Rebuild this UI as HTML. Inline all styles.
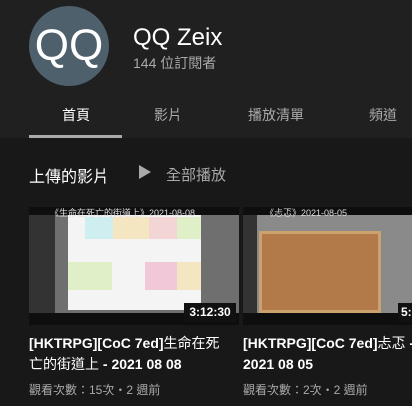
<!DOCTYPE html>
<html><head><meta charset="utf-8"><style>
*{margin:0;padding:0;box-sizing:border-box}
body{width:412px;height:406px;overflow:hidden;background:#181818;font-family:"Liberation Sans","Noto Sans CJK TC",sans-serif;position:relative}
.a{position:absolute}
</style></head><body>
<div class="a" style="left:0;top:0;width:412px;height:138px;background:#202020"></div>
<div class="a" style="left:29px;top:6px;width:80px;height:80px;border-radius:50%;background:#4e606c;color:#fff;font-size:44px;line-height:80px;text-align:center">QQ</div>
<div class="a" style="left:133px;top:24px;color:#fff;font-size:24px">QQ Zeix</div>
<div class="a" style="left:133px;top:53px;color:#aaa;font-size:14px">144 位訂閱者</div>
<div class="a" style="left:62px;top:105px;color:#fff;font-size:14px">首頁</div>
<div class="a" style="left:154px;top:105px;color:#aaa;font-size:14px">影片</div>
<div class="a" style="left:248px;top:105px;color:#aaa;font-size:14px">播放清單</div>
<div class="a" style="left:369px;top:105px;color:#aaa;font-size:14px">頻道</div>
<div class="a" style="left:29px;top:135px;width:93px;height:3px;background:#aaa"></div>
<div class="a" style="left:29px;top:163px;color:#fff;font-size:16px">上傳的影片</div>
<div class="a" style="left:139px;top:165px;width:0;height:0;border-left:12px solid #aaa;border-top:7px solid transparent;border-bottom:7px solid transparent"></div>
<div class="a" style="left:166px;top:164px;color:#aaa;font-size:15px">全部播放</div>

<div class="a" style="left:29px;top:207px;width:210px;height:118px;background:#0e0e0e"></div>
<div class="a" style="left:29px;top:215px;width:210px;height:98px;background:#6f6f6f"></div>
<div class="a" style="left:68px;top:215px;width:133px;height:95px;background:#f4f4f4"></div>
<div class="a" style="left:85px;top:217px;width:28px;height:22px;background:#cfeef0"></div>
<div class="a" style="left:113px;top:217px;width:36px;height:22px;background:#f3e6c0"></div>
<div class="a" style="left:149px;top:217px;width:28px;height:22px;background:#f3d5d5"></div>
<div class="a" style="left:177px;top:217px;width:24px;height:22px;background:#dff0c8"></div>
<div class="a" style="left:68px;top:262px;width:44px;height:28px;background:#dff0c8"></div>
<div class="a" style="left:145px;top:262px;width:32px;height:28px;background:#f0c8d8"></div>
<div class="a" style="left:177px;top:262px;width:24px;height:28px;background:#f3e6c0"></div>
<div class="a" style="left:29px;top:215px;width:26px;height:98px;background:#333"></div>
<div class="a" style="left:50px;top:206px;color:#ddd;font-size:9px">《生命在死亡的街道上》2021-08-08</div>
<div class="a" style="left:184px;top:303px;width:52px;height:19px;background:#111;color:#fff;font-size:12px;font-weight:bold;line-height:19px;text-align:center">3:12:30</div>

<div class="a" style="left:243px;top:207px;width:169px;height:118px;background:#0e0e0e"></div>
<div class="a" style="left:243px;top:215px;width:169px;height:98px;background:#8a8a8a"></div>
<div class="a" style="left:243px;top:215px;width:14px;height:98px;background:#333"></div>
<div class="a" style="left:259px;top:231px;width:122px;height:82px;background:#c9a26e"></div>
<div class="a" style="left:262px;top:234px;width:116px;height:76px;background:#b27a49"></div>
<div class="a" style="left:265px;top:206px;color:#ddd;font-size:9px">《忐忑》2021-08-05</div>
<div class="a" style="left:398px;top:303px;width:20px;height:19px;background:#111;color:#fff;font-size:12px;font-weight:bold;line-height:19px;padding-left:3px">5:</div>

<div class="a" style="left:29px;top:333px;width:200px;color:#fff;font-size:14px;line-height:21px;font-weight:bold">[HKTRPG][CoC 7ed]<span style="font-weight:normal">生命在死亡的街道上</span> - 2021 08 08</div>
<div class="a" style="left:29px;top:381px;color:#aaa;font-size:12px">觀看次數：15次・2 週前</div>
<div class="a" style="left:243px;top:333px;width:200px;color:#fff;font-size:14px;line-height:21px;font-weight:bold;white-space:nowrap">[HKTRPG][CoC 7ed]<span style="font-weight:normal">忐忑</span> -<br>2021 08 05</div>
<div class="a" style="left:243px;top:381px;color:#aaa;font-size:12px">觀看次數：2次・2 週前</div>
</body></html>
